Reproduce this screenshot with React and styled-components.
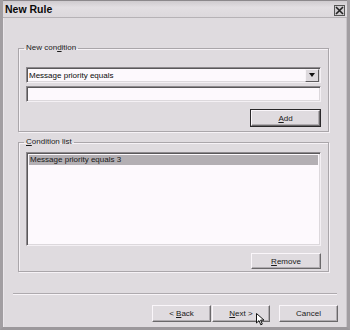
import React from 'react'
import styled, { createGlobalStyle } from 'styled-components'

const GlobalStyle = createGlobalStyle`
  html, body {
    margin: 0;
    padding: 0;
    background: #dedade;
  }
  * {
    box-sizing: border-box;
  }
`

const Window = styled.div`
  position: relative;
  width: 350px;
  height: 330px;
  display: flex;
  flex-direction: column;
  background: #dfdbdf;
  border-left: 3px solid #a29ea2;
  border-right: 3px solid #a29ea2;
  border-bottom: 3px solid #9c989c;
  box-shadow: inset 1px 0 0 #ebe7eb, inset -1px 0 0 #c8c4c8;
  font-family: 'Liberation Sans', Arial, sans-serif;
  font-size: 8px;
  color: #0a0a0a;
`

const TitleBar = styled.div`
  height: 18px;
  flex: none;
  display: flex;
  align-items: center;
  justify-content: space-between;
  padding: 0 2px 0 2px;
  background: linear-gradient(#cfcbcf, #e2dee2 40%, #dcd8dc);
  border-top: 1px solid #8c888c;
  border-bottom: 1px solid #b6b2b6;
`

const Title = styled.span`
  font-size: 10.5px;
  font-weight: bold;
  color: #0a0a0a;
`

const CloseBox = styled.div`
  width: 11px;
  height: 11px;
  margin-top: 2px;
  border: 1px solid #555;
  background: #d0ccd0;
  display: flex;
  align-items: center;
  justify-content: center;
`

const Body = styled.div`
  flex: 1;
  display: flex;
  flex-direction: column;
  padding: 25px 18px 0 15px;
`

const Group = styled.fieldset`
  margin: ${p => p.$top || 0}px 0 0 0;
  padding: 0 7px ${p => p.$bottom || 4}px 7px;
  border: 1px solid #aaa6aa;
  box-shadow: inset 1px 1px 0 #f6f2f6, 1px 1px 0 #f6f2f6;
  display: flex;
  flex-direction: column;
  min-width: 0;
`

const Legend = styled.legend`
  margin-left: -2px;
  padding: 0 2px;
  font-size: 8px;
  line-height: 10px;
  color: #1a1a1a;
`

const Key = styled.span`
  text-decoration: underline;
`

const Sunken = styled.div`
  height: ${p => p.$h}px;
  margin-top: ${p => p.$mt}px;
  background: #fdf9fd;
  border-top: 1px solid #8e8a8e;
  border-left: 1px solid #8e8a8e;
  border-right: 1px solid #f4f0f4;
  border-bottom: 1px solid #f4f0f4;
  box-shadow: inset 1px 1px 0 #5a585a, inset -1px -1px 0 #dcd8dc;
`

const Combo = styled(Sunken)`
  display: flex;
  align-items: center;
  padding-left: 2px;
  font-size: 8px;
`

const ComboText = styled.span`
  flex: 1;
`

const DropButton = styled.div`
  width: 14px;
  height: 13px;
  margin-right: 1px;
  background: #dedade;
  border-top: 1px solid #f8f4f8;
  border-left: 1px solid #f8f4f8;
  border-right: 1px solid #5e5c5e;
  border-bottom: 1px solid #5e5c5e;
  display: flex;
  align-items: center;
  justify-content: center;
`

const Arrow = styled.div`
  width: 0;
  height: 0;
  border-left: 3.5px solid transparent;
  border-right: 3.5px solid transparent;
  border-top: 4px solid #111;
`

const ButtonRow = styled.div`
  display: flex;
  justify-content: flex-end;
  margin-top: ${p => p.$mt || 0}px;
`

const Button = styled.div`
  width: ${p => p.$w}px;
  height: ${p => p.$h || 17}px;
  margin-right: ${p => p.$mr || 0}px;
  display: flex;
  align-items: center;
  justify-content: center;
  background: #dfdbdf;
  border-top: 1px solid #faf6fa;
  border-left: 1px solid #faf6fa;
  border-right: 1px solid #6a686a;
  border-bottom: 1px solid #6a686a;
  box-shadow: inset -1px -1px 0 #b0acb0;
  font-size: 8px;
  color: #1a1a1a;
`

const DefaultFrame = styled.div`
  border: 1px solid #2a282a;
`

const ListBox = styled(Sunken)`
  padding: 2px 2px;
`

const ListItem = styled.div`
  height: 10px;
  line-height: 10px;
  padding-left: 1px;
  background: ${p => (p.$selected ? '#b3afb3' : 'transparent')};
  font-size: 8px;
  color: #1a1a1a;
`

const Separator = styled.div`
  margin: 21px -8px 0 -5px;
  height: 2px;
  border-top: 1px solid #aeaaae;
  border-bottom: 1px solid #f8f4f8;
`

const Cursor = styled.svg`
  position: absolute;
  left: 253px;
  top: 313px;
`

export default function App () {
  return (
    <>
      <GlobalStyle />
      <Window>
        <TitleBar>
          <Title>New Rule</Title>
          <CloseBox>
            <svg width='9' height='9' viewBox='0 0 9 9'>
              <path d='M1 1 L8 8 M8 1 L1 8' stroke='#222' strokeWidth='1.6' />
            </svg>
          </CloseBox>
        </TitleBar>
        <Body>
          <Group $bottom={4}>
            <Legend>New con<Key>d</Key>ition</Legend>
            <Combo $h={16} $mt={14}>
              <ComboText>Message priority equals</ComboText>
              <DropButton><Arrow /></DropButton>
            </Combo>
            <Sunken $h={16} $mt={3} />
            <ButtonRow $mt={7}>
              <DefaultFrame>
                <Button $w={69} $h={16}><span><Key>A</Key>dd</span></Button>
              </DefaultFrame>
            </ButtonRow>
          </Group>
          <Group $top={5} $bottom={2}>
            <Legend><Key>C</Key>ondition list</Legend>
            <ListBox $h={94} $mt={5}>
              <ListItem $selected>Message priority equals 3</ListItem>
            </ListBox>
            <ButtonRow $mt={7}>
              <Button $w={70} $h={16}><span><Key>R</Key>emove</span></Button>
            </ButtonRow>
          </Group>
          <Separator />
          <ButtonRow $mt={10}>
            <Button $w={59} $mr={1}><span>&lt; <Key>B</Key>ack</span></Button>
            <Button $w={58} $mr={9}><span><Key>N</Key>ext &gt;</span></Button>
            <Button $w={59} $mr={-9}><span>Cancel</span></Button>
          </ButtonRow>
        </Body>
        <Cursor width='9' height='13' viewBox='0 0 9 13'>
          <path d='M0.5 0.5 L0.5 10 L3 7.6 L4.8 11.8 L6.3 11.1 L4.6 7.1 L8 7.1 Z' fill='#fff' stroke='#111' strokeWidth='1' />
        </Cursor>
      </Window>
    </>
  )
}
